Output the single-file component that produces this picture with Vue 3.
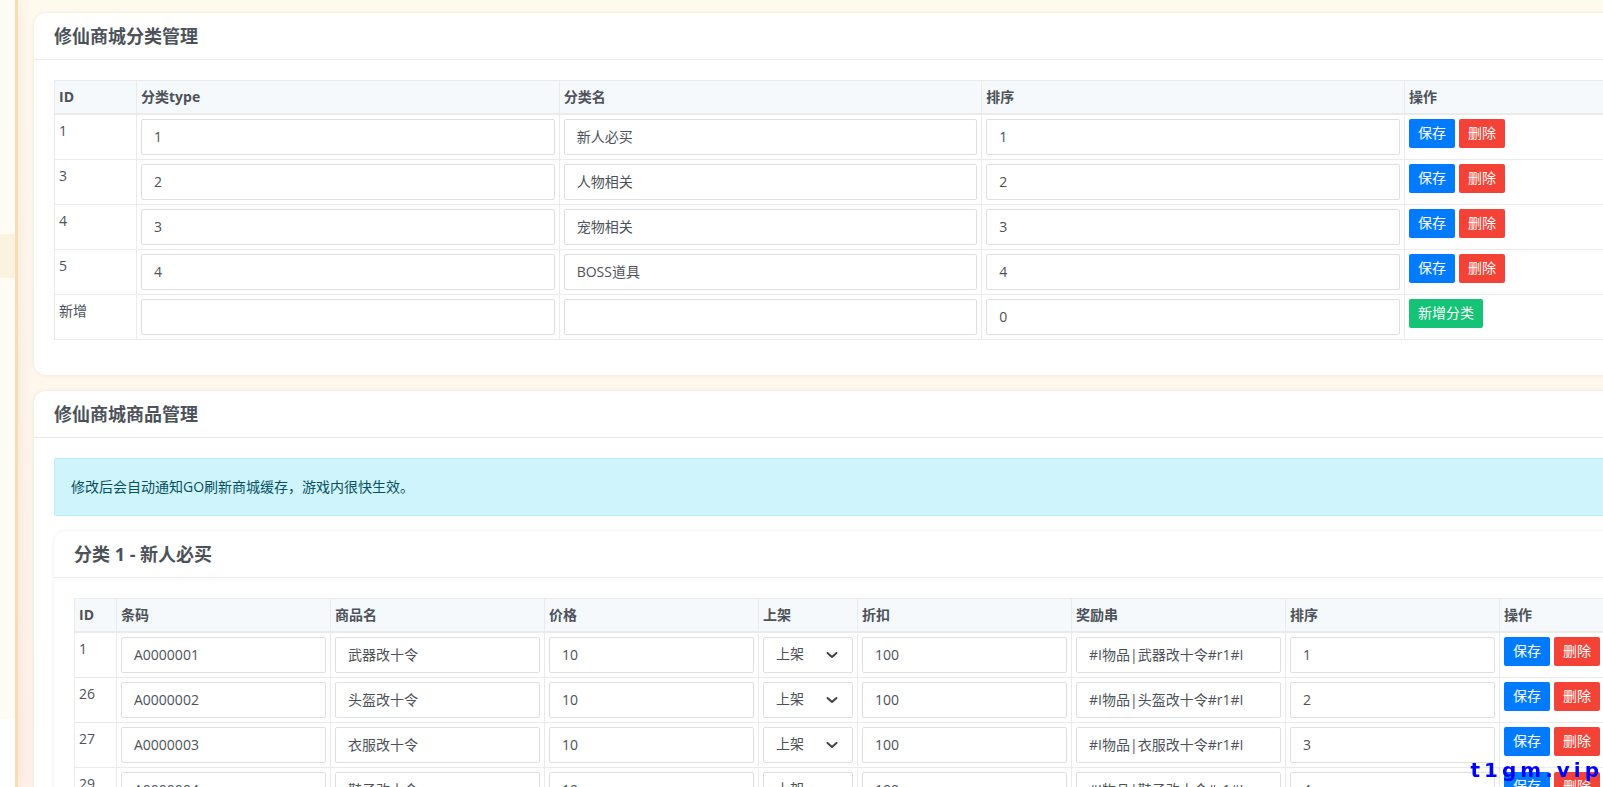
<script setup>
import { reactive } from 'vue'

const categories = reactive([
  { id: 1, type: '1', name: '新人必买', sort: '1' },
  { id: 3, type: '2', name: '人物相关', sort: '2' },
  { id: 4, type: '3', name: '宠物相关', sort: '3' },
  { id: 5, type: '4', name: 'BOSS道具', sort: '4' },
])
const draft = reactive({ type: '', name: '', sort: '0' })

const item = (id, n, name) => ({
  id,
  code: 'A000000' + n,
  name,
  price: '10',
  status: '1',
  discount: '100',
  reward: `#I物品|${name}#r1#I`,
  sort: String(n),
})
const goods = reactive([
  item(1, 1, '武器改十令'),
  item(26, 2, '头盔改十令'),
  item(27, 3, '衣服改十令'),
  item(29, 4, '鞋子改十令'),
])
</script>

<template>
  <div class="layout">
    <aside class="sidebar">
      <nav class="menu"><div class="menu-item"></div></nav>
    </aside>

    <main class="content">
      <section class="card">
        <header class="card-header"><h4>修仙商城分类管理</h4></header>
        <div class="card-body">
          <table class="table">
            <colgroup>
              <col class="col-label" /><col /><col /><col /><col class="col-wide" />
            </colgroup>
            <thead>
              <tr><th>ID</th><th>分类type</th><th>分类名</th><th>排序</th><th>操作</th></tr>
            </thead>
            <tbody>
              <tr v-for="c in categories" :key="c.id">
                <td>{{ c.id }}</td>
                <td><input v-model="c.type" class="control" type="text" aria-label="分类type" /></td>
                <td><input v-model="c.name" class="control" type="text" aria-label="分类名" /></td>
                <td><input v-model="c.sort" class="control" type="text" aria-label="排序" /></td>
                <td>
                  <div class="actions">
                    <button type="button" class="btn primary">保存</button>
                    <button type="button" class="btn danger">删除</button>
                  </div>
                </td>
              </tr>
              <tr>
                <td>新增</td>
                <td><input v-model="draft.type" class="control" type="text" aria-label="分类type" /></td>
                <td><input v-model="draft.name" class="control" type="text" aria-label="分类名" /></td>
                <td><input v-model="draft.sort" class="control" type="text" aria-label="排序" /></td>
                <td>
                  <div class="actions">
                    <button type="button" class="btn success">新增分类</button>
                  </div>
                </td>
              </tr>
            </tbody>
          </table>
        </div>
      </section>

      <section class="card">
        <header class="card-header"><h4>修仙商城商品管理</h4></header>
        <div class="card-body">
          <div class="alert" role="alert">修改后会自动通知GO刷新商城缓存，游戏内很快生效。</div>

          <section class="card">
            <header class="card-header"><h4>分类 1 - 新人必买</h4></header>
            <div class="card-body">
              <table class="table">
                <colgroup>
                  <col class="col-id" /><col /><col /><col /><col class="col-status" />
                  <col /><col /><col /><col class="col-actions" />
                </colgroup>
                <thead>
                  <tr>
                    <th>ID</th><th>条码</th><th>商品名</th><th>价格</th><th>上架</th>
                    <th>折扣</th><th>奖励串</th><th>排序</th><th>操作</th>
                  </tr>
                </thead>
                <tbody>
                  <tr v-for="g in goods" :key="g.id">
                    <td>{{ g.id }}</td>
                    <td><input v-model="g.code" class="control" type="text" aria-label="条码" /></td>
                    <td><input v-model="g.name" class="control" type="text" aria-label="商品名" /></td>
                    <td><input v-model="g.price" class="control" type="text" aria-label="价格" /></td>
                    <td>
                      <div class="select-wrap">
                        <select v-model="g.status" class="control" aria-label="上架">
                          <option value="1">上架</option>
                          <option value="0">下架</option>
                        </select>
                        <svg class="chevron" viewBox="0 0 12 8" aria-hidden="true">
                          <path d="M1.5 2 L6 6 L10.5 2" />
                        </svg>
                      </div>
                    </td>
                    <td><input v-model="g.discount" class="control" type="text" aria-label="折扣" /></td>
                    <td><input v-model="g.reward" class="control" type="text" aria-label="奖励串" /></td>
                    <td><input v-model="g.sort" class="control" type="text" aria-label="排序" /></td>
                    <td>
                      <div class="actions">
                        <button type="button" class="btn primary">保存</button>
                        <button type="button" class="btn danger">删除</button>
                      </div>
                    </td>
                  </tr>
                </tbody>
              </table>
            </div>
          </section>
        </div>
      </section>
    </main>

    <div class="watermark">t1gm.vip</div>
  </div>
</template>

<style>
body {
  margin: 0;
  background: #fff;
}
</style>

<style scoped>
.layout,
.layout * {
  box-sizing: border-box;
}
.layout {
  display: flex;
  height: 100vh;
  overflow: hidden;
  font-family: 'Open Sans', 'Noto Sans CJK SC', sans-serif;
  font-size: 14px;
  line-height: 24px;
  color: #4d5259;
  background: linear-gradient(180deg, #fffaee 0%, #fff6ec 50%, #fff2e9 100%);
}
.sidebar {
  position: relative;
  flex: none;
  width: 18px;
  background: #fff;
  border-right: 3px solid #f5deb3;
  box-shadow: 0 0 16px rgba(139, 69, 19, 0.1);
}
.menu {
  height: 719px;
  padding-top: 234px;
  background: #fffcf6;
}
.menu-item {
  height: 44px;
  background: #faf3e0;
}
.content {
  flex: 1;
  min-width: 0;
  padding: 13px 0 0 16px;
}
.content > .card {
  margin-right: -77px;
}
.card {
  margin-bottom: 16px;
  background: #fff;
  border-radius: 12px;
  box-shadow: 0 0 4px rgba(0, 0, 0, 0.08);
}
.card-header {
  display: flex;
  align-items: center;
  height: 47px;
  padding: 0 20px;
  border-bottom: 1px solid #ebebeb;
}
.card-header h4 {
  margin: 0;
  font-size: 18px;
  font-weight: 700;
}
.card-body {
  padding: 20px;
}
.table {
  width: 100%;
  margin-bottom: 15px;
  table-layout: fixed;
  border-collapse: separate;
  border-spacing: 0;
  border: solid #ebebeb;
  border-width: 1px 0 0 1px;
}
.table th,
.table td {
  padding: 4px;
  text-align: left;
  vertical-align: top;
  border: solid #ebebeb;
  border-width: 0 1px 1px 0;
}
.table th {
  font-weight: 700;
  background: #f5f9fc;
  border-bottom-width: 2px;
}
.col-label {
  width: 82px;
}
.col-wide {
  width: 255px;
}
.col-id {
  width: 42px;
}
.col-status {
  width: 99px;
}
.col-actions {
  width: 140px;
}
.control {
  display: block;
  width: 100%;
  height: 36px;
  margin: 0;
  padding: 0 12px 2px;
  font: inherit;
  color: inherit;
  background: #fff;
  border: 1px solid #dcdfe4;
  border-radius: 2px;
  outline: none;
  appearance: none;
}
.select-wrap {
  position: relative;
}
.chevron {
  position: absolute;
  top: 14px;
  right: 15px;
  width: 12px;
  height: 8px;
  fill: none;
  stroke: #3d4248;
  stroke-width: 2;
  stroke-linecap: round;
  stroke-linejoin: round;
  pointer-events: none;
}
.actions {
  display: flex;
  gap: 4px;
}
.btn {
  height: 29px;
  padding: 0 9px 2px;
  font: inherit;
  color: #fff;
  border: 0;
  border-radius: 2px;
  cursor: pointer;
}
.primary {
  background: #007bff;
}
.danger {
  background: #f44336;
}
.success {
  background: #15c377;
}
.alert {
  margin-bottom: 15px;
  padding: 16px;
  color: #055160;
  background: #cff4fc;
  border: 1px solid #b6effb;
  border-radius: 2px;
}
.watermark {
  position: fixed;
  right: 0;
  bottom: 5px;
  font-family: 'DejaVu Sans', sans-serif;
  font-size: 20px;
  font-weight: 700;
  line-height: 24px;
  letter-spacing: 4px;
  color: #00f;
}
</style>
